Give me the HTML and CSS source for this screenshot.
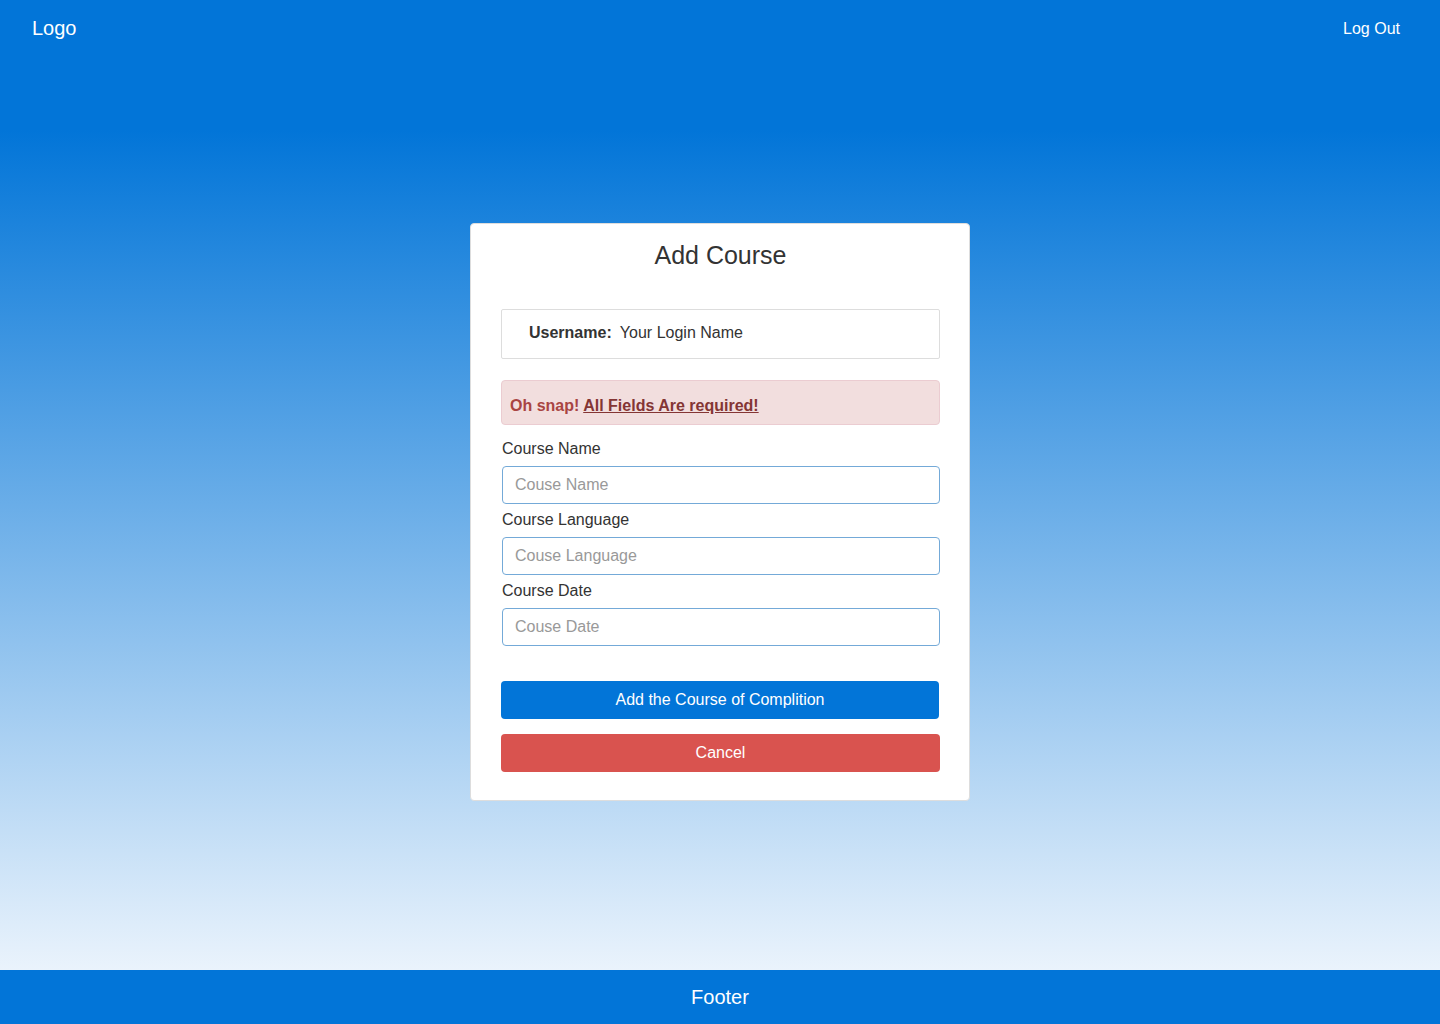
FILE: index.html
```html
<!DOCTYPE html>
<html lang="en">
<head>
<meta charset="utf-8">
<title>Add Course</title>
<link rel="stylesheet" href="styles.css">
</head>
<body>
<div class="page">
  <header class="topbar">
    <a class="logo" href="#">Logo</a>
    <a class="logout" href="#">Log Out</a>
  </header>
  <main class="main">
    <section class="card">
      <h2 class="card-title">Add Course</h2>
      <div class="user-box"><strong>Username:</strong> Your Login Name</div>
      <div class="alert"><strong>Oh snap!</strong> <a href="#" class="alert-link">All Fields Are required!</a></div>
      <form class="form">
        <label class="label" for="cname">Course Name</label>
        <input class="input" id="cname" type="text" placeholder="Couse Name">
        <label class="label" for="clang">Course Language</label>
        <input class="input" id="clang" type="text" placeholder="Couse Language">
        <label class="label" for="cdate">Course Date</label>
        <input class="input" id="cdate" type="text" placeholder="Couse Date">
      </form>
      <button class="btn btn-primary" type="button">Add the Course of Complition</button>
      <button class="btn btn-danger" type="button">Cancel</button>
    </section>
  </main>
</div>
<footer class="footer">Footer</footer>
</body>
</html>
```
FILE: styles.css
```css
* { box-sizing: border-box; }
html, body { margin: 0; padding: 0; }
body {
  font-family: "Liberation Sans", Arial, sans-serif;
  color: #333;
  min-height: 1024px;
  display: flex;
  flex-direction: column;
}
.page {
  height: 970px;
  background: linear-gradient(to bottom, #0275d8 0px, #0275d8 130px, #eaf3fc 970px);
  display: flex;
  flex-direction: column;
}
.topbar {
  height: 56px;
  display: flex;
  align-items: center;
  justify-content: space-between;
  padding: 0 40px 0 32px;
}
.logo {
  color: #fff;
  text-decoration: none;
  font-size: 20px;
  line-height: 24px;
  margin-top: -1px;
}
.logout {
  color: #fff;
  text-decoration: none;
  font-size: 16px;
  line-height: 20px;
  margin-top: 2px;
}
.main {
  display: flex;
  justify-content: center;
  padding-top: 167px;
}
.card {
  width: 500px;
  background: #fff;
  border: 1px solid #ddd;
  border-radius: 4px;
  padding: 0 29px 28px 30px;
  display: flex;
  flex-direction: column;
}
.card-title {
  margin: 18px 0 0;
  font-size: 25px;
  font-weight: 400;
  line-height: 26px;
  text-align: center;
  color: #333;
}
.user-box {
  margin-top: 41px;
  border: 1px solid #ddd;
  border-radius: 2px;
  padding: 11px 27px 13px;
  font-size: 16px;
  line-height: 24px;
  color: #333;
}
.user-box strong { margin-right: 4px; }
.alert {
  margin-top: 21px;
  background: #f2dede;
  border: 1px solid #ebccd1;
  border-radius: 4px;
  padding: 15px 8px 8px;
  font-size: 16px;
  line-height: 20px;
  color: #a94442;
  font-weight: 700;
}
.alert-link {
  color: #843534;
  text-decoration: underline;
}
.form {
  display: flex;
  flex-direction: column;
  margin-left: 1px;
  padding-top: 14px;
}
.label {
  font-size: 16px;
  line-height: 20px;
  color: #333;
  margin-bottom: 7px;
}
.input {
  height: 38px;
  border: 1px solid #74aad8;
  border-radius: 4px;
  padding: 0 12px;
  font-family: inherit;
  font-size: 16px;
  color: #555;
  margin-bottom: 6px;
  outline: none;
}
.input:last-child { margin-bottom: 5px; }
.input::placeholder { color: #999; }
.btn {
  height: 38px;
  border: none;
  border-radius: 4px;
  color: #fff;
  font-family: inherit;
  font-size: 16px;
  cursor: pointer;
}
.btn-primary {
  margin-top: 30px;
  background: #0275d8;
  width: 438px;
}
.btn-danger {
  margin-top: 15px;
  background: #d9534f;
}
.footer {
  height: 54px;
  background: #0275d8;
  color: #fff;
  font-size: 20px;
  display: flex;
  align-items: center;
  justify-content: center;
}
```
